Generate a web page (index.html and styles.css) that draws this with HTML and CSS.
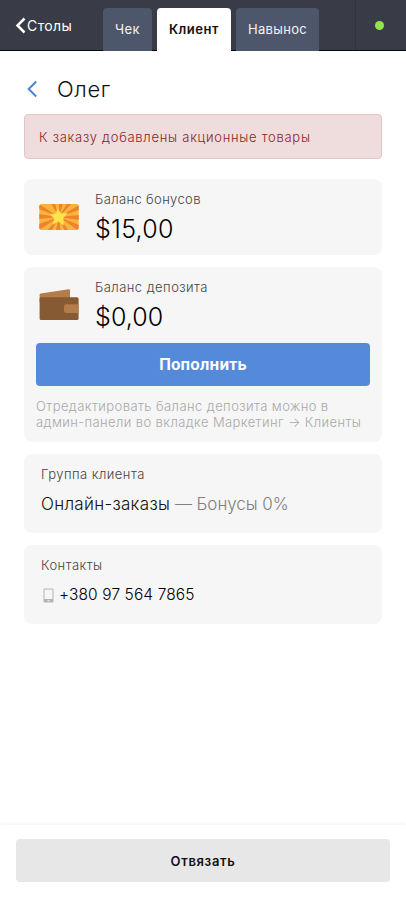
FILE: index.html
```html
<!DOCTYPE html>
<html lang="ru">
<head>
<meta charset="utf-8">
<title>Клиент</title>
<link rel="stylesheet" href="styles.css">
</head>
<body>
<header class="topbar">
  <a class="tables">
    <svg class="tables-arrow" width="11" height="17" viewBox="0 0 11 17"><path d="M9.5 1.5L2.5 8.5l7 7" fill="none" stroke="#fff" stroke-width="2.5"/></svg>
    <span>Столы</span>
  </a>
  <nav class="tabs">
    <a class="tab tab-check">Чек</a>
    <a class="tab tab-client active">Клиент</a>
    <a class="tab tab-takeaway">Навынос</a>
  </nav>
  <div class="status"><span class="dot"></span></div>
</header>
<main class="content">
  <div class="title">
    <svg width="12" height="18" viewBox="0 0 12 18"><path d="M10.2 1.5L2.7 9l7.5 7.5" fill="none" stroke="#4a86d8" stroke-width="2"/></svg>
    <h1>Олег</h1>
  </div>
  <div class="alert">К заказу добавлены акционные товары</div>
  <section class="card bonus">
    <div class="balance">
      <svg class="icon" width="40" height="34" viewBox="0 0 40 34">
        <defs><clipPath id="ticket"><rect x="0.3" y="4" width="39.4" height="26" rx="2.5"/></clipPath></defs>
        <g clip-path="url(#ticket)">
          <rect y="4" width="40" height="26" fill="#f9b53b"/>
          <path fill="#ee832e" d="M20 17L10 0h5zM20 17L20 0h5zM20 17L30 0h6zM20 17L40 5v5zM20 17L40 15v5zM20 17L40 25v6zM20 17L27 34h5zM20 17L16 34h6zM20 17L5 34h6zM20 17L0 24v6zM20 17L0 14v5zM20 17L0 4v5z"/>
          <path d="M18.5 8.5L21.8 13.4L28.3 13.2L24.2 17.8L24.5 25L19.4 21.2L14 24.3L15.4 18.4L11 14.4L17 13.9z" fill="#ffe44d" stroke="#ffe44d" stroke-width=".4" stroke-linejoin="round"/>
        </g>
      </svg>
      <div class="values"><div class="label">Баланс бонусов</div><div class="amount">$15,00</div></div>
    </div>
  </section>
  <section class="card deposit">
    <div class="balance">
      <svg class="icon" width="40" height="34" viewBox="0 0 40 34">
        <path d="M.6 6.7Q.6 5.7 1.7 5.5L29.6 1.3Q31 1.2 31 2.5V14H.6z" fill="#b47c4b"/>
        <rect x=".6" y="9.3" width="39" height="22.7" rx="1.6" fill="#865a32"/>
        <path d="M39.6 16.2H27.3Q25 16.2 25 18.3v4.4Q25 25 27.3 25h12.3z" fill="#b47c4b"/>
      </svg>
      <div class="values"><div class="label">Баланс депозита</div><div class="amount">$0,00</div></div>
    </div>
    <button class="topup">Пополнить</button>
    <p class="hint"><span class="hint-a">Отредактировать баланс депозита можно в</span><br><span class="hint-b">админ-панели во вкладке Маркетинг → Клиенты</span></p>
  </section>
  <section class="card info">
    <div class="label">Группа клиента</div>
    <div class="group"><span class="group-name">Онлайн-заказы</span> <span class="muted">— Бонусы 0%</span></div>
  </section>
  <section class="card info contacts">
    <div class="label">Контакты</div>
    <div class="phone">
      <svg width="11" height="15" viewBox="0 0 11 15"><path fill="#b4b4b4" fill-rule="evenodd" d="M1.5.5h8q1 0 1 1v12q0 1-1 1h-8q-1 0-1-1v-12q0-1 1-1zm0 1v9.6h8V1.5zm3 10.8v1h2v-1z"/></svg>
      <span>+380 97 564 7865</span>
    </div>
  </section>
</main>
<footer class="footer"><button class="unlink">Отвязать</button></footer>
</body>
</html>
```
FILE: styles.css
```css
* { box-sizing: border-box; }
body {
  margin: 0;
  height: 900px;
  display: flex;
  flex-direction: column;
  overflow: hidden;
  background: #fff;
  color: #111;
  font-family: Inter, "Liberation Sans", sans-serif;
}
button { display: block; width: 100%; border: 0; font-family: inherit; padding: 0; }
svg { display: block; flex: none; }
.topbar {
  display: flex;
  flex: none;
  height: 51px;
  background: #393c46;
  box-shadow: inset 0 -1px #08090c;
}
.tables {
  display: flex;
  align-items: center;
  gap: 1px;
  width: 103px;
  padding-left: 15px;
  color: #fff;
  font-size: 14px;
  letter-spacing: .4px;
}
.tabs { display: flex; align-items: flex-end; gap: 5px; flex: 1; }
.tab {
  height: 43px;
  line-height: 43px;
  text-align: center;
  background: #4d566a;
  color: #f3f4f6;
  font-size: 13px;
  letter-spacing: .35px;
  border-radius: 4px 4px 0 0;
}
.tab-check { width: 49px; }
.tab-client { width: 74px; }
.tab-takeaway { width: 83px; }
.tab.active { background: #fff; color: #111; font-weight: 600; letter-spacing: .55px; }
.status {
  width: 51px;
  border-left: 1px solid #30333c;
  display: flex;
  align-items: center;
  justify-content: center;
  padding-right: 3px;
  height: 50px;
}
.dot { width: 9px; height: 9px; border-radius: 50%; background: #94e34b; }
.content { flex: 1; padding: 0 24px; }
.title { display: flex; align-items: center; gap: 19px; height: 63px; padding: 13px 0 0 2px; }
.title h1 { margin: 0; font-size: 22px; letter-spacing: .6px; font-weight: 300; line-height: 28px; }
.alert {
  height: 45px;
  line-height: 44px;
  padding-left: 14px;
  border: 1px solid #e4c5c7;
  border-radius: 4px;
  background: #efdcdd;
  color: #8f2225;
  font-size: 13px;
  font-weight: 300;
  letter-spacing: .73px;
}
.card { background: #f6f6f6; border-radius: 8px; margin-top: 12px; }
.bonus { margin-top: 20px; height: 76px; }
.deposit { height: 175px; padding: 0 12px; }
.deposit .balance { padding-left: 3px; }
.balance { display: flex; gap: 16px; height: 76px; padding-left: 15px; }
.balance .icon { margin-top: 21px; }
.values { padding-top: 12px; }
.label { font-size: 13px; line-height: 17px; color: #444; font-weight: 300; letter-spacing: .46px; }
.bonus .label { letter-spacing: .37px; }
.amount { font-size: 25px; line-height: 30px; margin-top: 6px; color: #000; font-weight: 300; letter-spacing: .25px; }
.deposit .amount { letter-spacing: .1px; }
.topup {
  height: 43px;
  border-radius: 4px;
  background: #558ada;
  color: #fff;
  font-size: 15.5px;
  font-weight: 700;
  letter-spacing: .2px;
}
.hint { margin: 12px 0 0; font-size: 13px; line-height: 16px; color: #a9a9a9; font-weight: 300; letter-spacing: .4px; white-space: nowrap; }
.hint-a { letter-spacing: .43px; }
.info { height: 79px; padding: 12px 17px 0; }
.group { font-size: 17px; line-height: 22px; margin-top: 10px; font-weight: 300; }
.group-name { letter-spacing: .3px; }
.muted { color: #7f7f7f; letter-spacing: -.05px; }
.phone { display: flex; align-items: center; gap: 5px; margin: 11px 0 0 2px; font-size: 15.5px; line-height: 20px; font-weight: 300; letter-spacing: .1px; color: #000; }
.footer { flex: none; height: 75px; padding: 14px 16px 0; background: #fff; box-shadow: 0 -1px 4px rgba(0, 0, 0, .05); }
.unlink {
  height: 43px;
  border-radius: 4px;
  background: #e7e7e7;
  color: #111;
  font-size: 13px;
  font-weight: 600;
  letter-spacing: .65px;
}
```
